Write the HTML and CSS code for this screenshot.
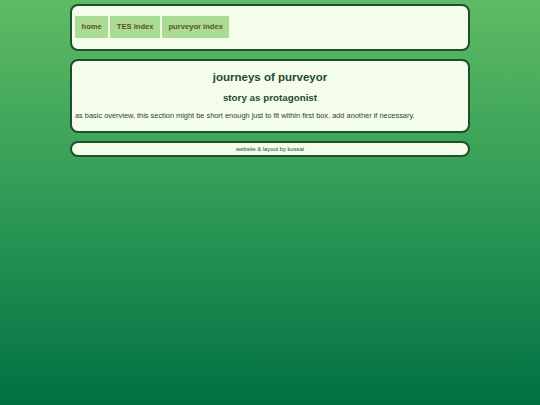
FILE: index.html
```html
<!DOCTYPE html>
<html lang="en">
<head>
  <meta charset="UTF-8" />
  <meta name="viewport" content="width=device-width, initial-scale=1" />
  <title>journeys of purveyor</title>
  <link rel="stylesheet" href="styles.css">
</head>
<body>
  <div class="container">
    <nav class="box nav">
      <a href="#" class="nav-link">home</a>
      <a href="#" class="nav-link">TES index</a>
      <a href="#" class="nav-link">purveyor index</a>
    </nav>

    <main class="box content">
      <h1>journeys of purveyor</h1>
      <h2>story as protagonist</h2>
      <p>as basic overview, this section might be short enough just to fit within first box. add another if necessary.</p>
    </main>

    <footer class="box footer">website &amp; layout by kossai</footer>
  </div>
</body>
</html>
```

FILE: styles.css
```css
* {
  box-sizing: border-box;
  font-family: 'Liberation Sans', Arial, sans-serif;
}
html {
  min-height: 100%;
  background: linear-gradient(to bottom, #5fbb63 0%, #2f9a56 50%, #007043 100%);
}
body {
  margin: 0;
  padding: 4px 0;
  min-height: 405px;
  color: #1d4b30;
}
.container {
  width: 400px;
  margin: 0 auto;
  display: flex;
  flex-direction: column;
  gap: 8px;
}
.box {
  background: #f3fde9;
  border: 2px solid #1d4f31;
  border-radius: 8px;
}
.nav {
  display: flex;
  gap: 2px;
  padding: 10px 3px 11px;
}
.nav-link {
  display: block;
  padding: 0 6.5px;
  line-height: 22px;
  background: #aadc95;
  color: #5d5222;
  font-size: 7.6px;
  font-weight: bold;
  text-decoration: none;
}
.content {
  padding: 7px 3px 9px;
}
h1 {
  margin: 0;
  text-align: center;
  font-size: 11.5px;
  line-height: 18px;
}
h2 {
  margin: 5px 0 0;
  text-align: center;
  font-size: 9.8px;
  line-height: 14px;
}
p {
  margin: 5px 0 0;
  font-size: 7.4px;
  line-height: 12px;
  color: #27452f;
}
.footer {
  padding: 1px 0;
  text-align: center;
  font-size: 5.8px;
  line-height: 10px;
  color: #27452f;
}
```
